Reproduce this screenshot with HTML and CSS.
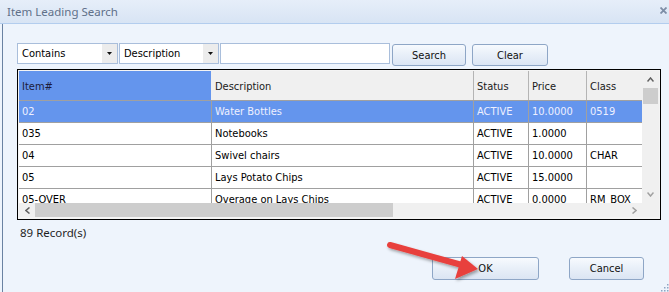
FILE: index.html
```html
<!DOCTYPE html>
<html>
<head>
<meta charset="utf-8">
<link rel="stylesheet" href="styles.css">
</head>
<body>
<div class="window">
  <div class="titlebar">
    <span class="title">Item Leading Search</span>
    <svg class="close" width="7" height="7" viewBox="0 0 7 7"><path d="M0.5 0.5 L6.5 6.5 M6.5 0.5 L0.5 6.5" stroke="#7d8ea6" stroke-width="1.8"/></svg>
  </div>
  <div class="body">
    <div class="toolbar">
      <div class="combo combo-op"><span class="combo-text">Contains</span><span class="combo-btn"><svg width="5" height="3" viewBox="0 0 5 3"><path d="M0 0 H5 L2.5 3 Z" fill="#111"/></svg></span></div>
      <div class="combo combo-field"><span class="combo-text">Description</span><span class="combo-btn"><svg width="5" height="3" viewBox="0 0 5 3"><path d="M0 0 H5 L2.5 3 Z" fill="#111"/></svg></span></div>
      <div class="textbox"></div>
      <div class="btn btn-search">Search</div>
      <div class="btn btn-clear">Clear</div>
    </div>
    <div class="grid">
      <div class="grid-main">
        <div class="grid-data">
          <div class="row header">
            <div class="cell sorted">Item#</div>
            <div class="cell">Description</div>
            <div class="cell">Status</div>
            <div class="cell">Price</div>
            <div class="cell last">Class</div>
          </div>
          <div class="row selected">
            <div class="cell">02</div>
            <div class="cell">Water Bottles</div>
            <div class="cell">ACTIVE</div>
            <div class="cell">10.0000</div>
            <div class="cell last">0519</div>
          </div>
          <div class="row">
            <div class="cell">035</div>
            <div class="cell">Notebooks</div>
            <div class="cell">ACTIVE</div>
            <div class="cell">1.0000</div>
            <div class="cell last"></div>
          </div>
          <div class="row">
            <div class="cell">04</div>
            <div class="cell">Swivel chairs</div>
            <div class="cell">ACTIVE</div>
            <div class="cell">10.0000</div>
            <div class="cell last">CHAR</div>
          </div>
          <div class="row">
            <div class="cell">05</div>
            <div class="cell">Lays Potato Chips</div>
            <div class="cell">ACTIVE</div>
            <div class="cell">15.0000</div>
            <div class="cell last"></div>
          </div>
          <div class="row">
            <div class="cell">05-OVER</div>
            <div class="cell">Overage on Lays Chips</div>
            <div class="cell">ACTIVE</div>
            <div class="cell">0.0000</div>
            <div class="cell last">RM_BOX</div>
          </div>
        </div>
        <div class="vscroll">
          <div class="sb-arrow"><svg width="7" height="5" viewBox="0 0 7 5"><path d="M0.5 4.5 L3.5 1 L6.5 4.5" fill="none" stroke="#606060" stroke-width="1.5"/></svg></div>
          <div class="vthumb"></div>
          <div class="sb-fill"></div>
          <div class="sb-arrow"><svg width="7" height="5" viewBox="0 0 7 5"><path d="M0.5 0.5 L3.5 4 L6.5 0.5" fill="none" stroke="#a0a0a0" stroke-width="1.5"/></svg></div>
        </div>
      </div>
      <div class="hscroll">
        <div class="htrack">
          <div class="hb-arrow"><svg width="5" height="7" viewBox="0 0 5 7"><path d="M4.5 0.5 L1 3.5 L4.5 6.5" fill="none" stroke="#606060" stroke-width="1.5"/></svg></div>
          <div class="hthumb"></div>
          <div class="sb-fill"></div>
          <div class="hb-arrow"><svg width="5" height="7" viewBox="0 0 5 7"><path d="M0.5 0.5 L4 3.5 L0.5 6.5" fill="none" stroke="#a0a0a0" stroke-width="1.5"/></svg></div>
        </div>
        <div class="corner"></div>
      </div>
    </div>
    <div class="records">89 Record(s)</div>
    <div class="footer">
      <div class="btn btn-ok">OK</div>
      <div class="btn btn-cancel">Cancel</div>
    </div>
  </div>
  <svg class="arrow" width="669" height="292" viewBox="0 0 669 292">
    <defs>
      <filter id="sh" x="-20%" y="-20%" width="140%" height="160%">
        <feDropShadow dx="1.5" dy="2" stdDeviation="1.5" flood-color="#000" flood-opacity="0.35"/>
      </filter>
    </defs>
    <g filter="url(#sh)">
      <line x1="390" y1="245" x2="462" y2="265" stroke="#e8413e" stroke-width="6" stroke-linecap="round"/>
      <path d="M478 269 L455 279 L462 256 Z" fill="#e8413e"/>
    </g>
  </svg>
  <svg class="grip" width="10" height="10" viewBox="0 0 10 10">
    <rect x="8" y="2" width="1.5" height="1.5" fill="#8ea5c4"/>
    <rect x="5" y="5" width="1.5" height="1.5" fill="#8ea5c4"/>
    <rect x="8" y="5" width="1.5" height="1.5" fill="#8ea5c4"/>
    <rect x="2" y="8" width="1.5" height="1.5" fill="#8ea5c4"/>
    <rect x="5" y="8" width="1.5" height="1.5" fill="#8ea5c4"/>
    <rect x="8" y="8" width="1.5" height="1.5" fill="#8ea5c4"/>
  </svg>
</div>
</body>
</html>
```
FILE: styles.css
```css
html, body {
  margin: 0;
  padding: 0;
  background: #eef4fc;
}

.window {
  position: relative;
  width: 669px;
  height: 292px;
  overflow: hidden;
  background: #eef4fc;
  font-family: "DejaVu Sans Condensed", "DejaVu Sans", sans-serif;
  font-stretch: condensed;
  font-size: 11px;
  color: #000;
}

.titlebar {
  height: 23px;
  box-sizing: border-box;
  display: flex;
  align-items: center;
  padding-left: 7px;
  padding-right: 2px;
  background: linear-gradient(#e6eef9, #d8e4f4);
  border-bottom: 1px solid #b3cdee;
  height: 24px;
}

.title {
  font-family: "Noto Sans", sans-serif;
  font-stretch: normal;
  font-size: 11.5px;
  color: #5f7089;
  margin-top: -1px;
}

.close {
  margin-left: auto;
  margin-top: -2px;
}

.body {
  margin-left: 2px;
  border-left: 1px solid #6a82a2;
  padding-left: 14px;
  padding-top: 19px;
  height: 268px;
  box-sizing: border-box;
}

.toolbar {
  display: flex;
  align-items: flex-start;
  height: 23px;
}

.combo {
  display: flex;
  height: 21px;
  box-sizing: border-box;
  border: 1px solid #a9bedb;
  background: #fff;
}

.combo-op {
  width: 101px;
}

.combo-field {
  width: 100px;
  margin-left: 1px;
}

.combo-text {
  flex: 1;
  padding-left: 4px;
  line-height: 19px;
  white-space: nowrap;
  overflow: hidden;
}

.combo-btn {
  width: 15px;
  background: #ececec;
  display: flex;
  align-items: center;
  justify-content: center;
}

.textbox {
  width: 170px;
  height: 21px;
  box-sizing: border-box;
  margin-left: 1px;
  border: 1px solid #a9bedb;
  background: #fff;
}

.btn {
  box-sizing: border-box;
  height: 22px;
  border: 1px solid #8ea6c6;
  border-radius: 3px;
  background: linear-gradient(#f7fafe, #e8eff8 50%, #dbe5f3);
  display: flex;
  align-items: center;
  justify-content: center;
  color: #111;
}

.btn-search {
  width: 74px;
  margin-left: 2px;
  margin-top: 1px;
}

.btn-clear {
  width: 76px;
  margin-left: 6px;
  margin-top: 1px;
}

.grid {
  margin-top: 3px;
  width: 644px;
  height: 151px;
  box-sizing: border-box;
  border: 1px solid #000;
  padding: 1px 1px 2px 1px;
  background: #f4f4f4;
}

.grid-main {
  display: flex;
  height: 132px;
}

.grid-data {
  width: 623px;
  height: 132px;
  overflow: hidden;
  background: #fff;
}

.row {
  display: grid;
  grid-template-columns: 193px 262px 55px 58px 55px;
  height: 22px;
  box-sizing: border-box;
  border-bottom: 1px solid #a0a0a0;
}

.cell {
  padding-left: 3px;
  line-height: 21px;
  white-space: nowrap;
  overflow: hidden;
  border-right: 1px solid #a0a0a0;
}

.cell.last {
  border-right: none;
}

.row.header {
  height: 30px;
  background: #f0f0f0;
  color: #1a1a1a;
}

.row.header .cell {
  line-height: 30px;
  padding-top: 1px;
  border-right-color: #b4b4b4;
}

.row.header .cell.sorted {
  background: #6495ed;
  border-right: 1px solid #f0f0f0;
  color: #1c1c3a;
}

.row.selected {
  background: #6495ed;
  color: #eef0ff;
}

.vscroll {
  width: 17px;
  background: #f0f0f0;
  display: flex;
  flex-direction: column;
}

.sb-arrow {
  height: 17px;
  display: flex;
  align-items: center;
  justify-content: center;
}

.vthumb {
  height: 16px;
  margin: 0 1px;
  background: #cdcdcd;
}

.sb-fill {
  flex: 1;
}

.hscroll {
  display: flex;
  height: 14px;
}

.htrack {
  width: 623px;
  display: flex;
  background: #f0f0f0;
}

.hb-arrow {
  width: 16px;
  display: flex;
  align-items: center;
  justify-content: center;
}

.hthumb {
  width: 358px;
  background: #cdcdcd;
}

.corner {
  width: 17px;
  background: #f0f0f0;
}

.records {
  margin-top: 5px;
  padding-left: 3px;
  font-family: "Noto Sans", sans-serif;
  font-stretch: normal;
  font-size: 11.5px;
  line-height: 15px;
  color: #1e1e1e;
}

.footer {
  display: flex;
  margin-top: 17px;
}

.btn-ok {
  width: 107px;
  height: 23px;
  margin-left: 415px;
}

.btn-cancel {
  width: 75px;
  height: 23px;
  margin-left: 30px;
}

.arrow {
  position: absolute;
  left: 0;
  top: 0;
  pointer-events: none;
}

.grip {
  position: absolute;
  right: 0;
  bottom: 0;
}
```
